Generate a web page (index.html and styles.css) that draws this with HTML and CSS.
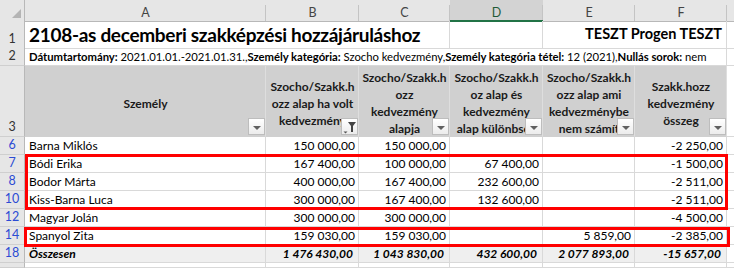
FILE: index.html
```html
<!DOCTYPE html>
<html lang="hu">
<head>
<meta charset="utf-8">
<title>Szakképzési hozzájárulás</title>
<link rel="stylesheet" href="styles.css">
</head>
<body>
<div class="sheet">
  <div class="row hdr">
    <div class="corner"><span class="tri"></span></div>
    <div class="ch">A</div>
    <div class="ch">B</div>
    <div class="ch">C</div>
    <div class="ch sel">D</div>
    <div class="ch">E</div>
    <div class="ch">F</div>
    <div class="ch rest"></div>
  </div>

  <div class="row r1">
    <div class="rh">1</div>
    <div class="c title span3">2108-as decemberi szakképzési hozzájáruláshoz</div>
    <div class="c"></div>
    <div class="c teszt span2">TESZT Progen TESZT</div>
    <div class="c rest"></div>
  </div>

  <div class="row r2">
    <div class="rh">2</div>
    <div class="c info span6"><b>Dátumtartomány:</b> 2021.01.01.-2021.01.31.,<b>Személy kategória:</b> Szocho kedvezmény,<b>Személy kategória tétel:</b> 12 (2021),<b>Nullás sorok:</b> nem</div>
    <div class="c rest"></div>
  </div>

  <div class="row r3">
    <div class="rh">3</div>
    <div class="c th"><div class="tt">Személy</div><span class="fb"><span class="arr"></span></span></div>
    <div class="c th"><div class="tt">Szocho/Szakk.h<br>ozz alap ha volt<br>kedvezmény</div><span class="fb on"><svg width="15" height="15" viewBox="0 0 15 15"><path d="M1.5 12.5h4l-2 2z" fill="#555"/><path d="M6 3h8l-3 4v6h-2v-6z" fill="#444"/></svg></span></div>
    <div class="c th"><div class="tt">Szocho/Szakk.h<br>ozz<br>kedvezmény<br>alapja</div><span class="fb"><span class="arr"></span></span></div>
    <div class="c th"><div class="tt">Szocho/Szakk.h<br>oz alap és<br>kedvezmény<br>alap különbség</div><span class="fb"><span class="arr"></span></span></div>
    <div class="c th"><div class="tt">Szocho/Szakk.h<br>ozz alap ami<br>kedvezménybe<br>nem számít</div><span class="fb"><span class="arr"></span></span></div>
    <div class="c th"><div class="tt">Szakk.hozz<br>kedvezmény<br>összeg</div><span class="fb"><span class="arr"></span></span></div>
    <div class="c rest"></div>
  </div>

  <div class="row d">
    <div class="rh f">6</div>
    <div class="c">Barna Miklós</div>
    <div class="c n">150 000,00</div>
    <div class="c n">150 000,00</div>
    <div class="c n"></div>
    <div class="c n"></div>
    <div class="c n">-2 250,00</div>
    <div class="c rest"></div>
  </div>
  <div class="row d">
    <div class="rh f">7</div>
    <div class="c">Bódi Erika</div>
    <div class="c n">167 400,00</div>
    <div class="c n">100 000,00</div>
    <div class="c n">67 400,00</div>
    <div class="c n"></div>
    <div class="c n">-1 500,00</div>
    <div class="c rest"></div>
  </div>
  <div class="row d">
    <div class="rh f">8</div>
    <div class="c">Bodor Márta</div>
    <div class="c n">400 000,00</div>
    <div class="c n">167 400,00</div>
    <div class="c n">232 600,00</div>
    <div class="c n"></div>
    <div class="c n">-2 511,00</div>
    <div class="c rest"></div>
  </div>
  <div class="row d">
    <div class="rh f">10</div>
    <div class="c">Kiss-Barna Luca</div>
    <div class="c n">300 000,00</div>
    <div class="c n">167 400,00</div>
    <div class="c n">132 600,00</div>
    <div class="c n"></div>
    <div class="c n">-2 511,00</div>
    <div class="c rest"></div>
  </div>
  <div class="row d">
    <div class="rh f">12</div>
    <div class="c">Magyar Jolán</div>
    <div class="c n">300 000,00</div>
    <div class="c n">300 000,00</div>
    <div class="c n"></div>
    <div class="c n"></div>
    <div class="c n">-4 500,00</div>
    <div class="c rest"></div>
  </div>
  <div class="row d">
    <div class="rh f">14</div>
    <div class="c">Spanyol Zita</div>
    <div class="c n">159 030,00</div>
    <div class="c n">159 030,00</div>
    <div class="c n"></div>
    <div class="c n">5 859,00</div>
    <div class="c n">-2 385,00</div>
    <div class="c rest"></div>
  </div>
  <div class="row d tot">
    <div class="rh f">18</div>
    <div class="c">Összesen</div>
    <div class="c n">1 476 430,00</div>
    <div class="c n">1 043 830,00</div>
    <div class="c n">432 600,00</div>
    <div class="c n">2 077 893,00</div>
    <div class="c n">-15 657,00</div>
    <div class="c rest"></div>
  </div>
  <div class="row d tail">
    <div class="rh"></div>
    <div class="c"></div>
    <div class="c"></div>
    <div class="c"></div>
    <div class="c"></div>
    <div class="c"></div>
    <div class="c"></div>
    <div class="c rest"></div>
  </div>

  <div class="mark m1"></div>
  <div class="mark m2"></div>
</div>
</body>
</html>
```

FILE: styles.css
```css
html, body {
  margin: 0;
  padding: 0;
  background: #ffffff;
}

.sheet {
  position: relative;
  width: 734px;
  height: 268px;
  overflow: hidden;
  font-family: Lato, "Open Sans", sans-serif;
  font-size: 12px;
  color: #000;
}

.row {
  display: grid;
  grid-template-columns: 25px 241px 93px 91px 93px 92px 92px 1fr;
}

.row > div {
  box-sizing: border-box;
  min-width: 0;
}

/* column header */
.hdr { height: 21px; }
.ch {
  background:
    linear-gradient(#c4c4c4, #c4c4c4) right 5px / 1px 16px no-repeat,
    #e6e6e6;
  border-bottom: 1px solid #b8b8b8;
  color: #444;
  font-size: 12.5px;
  text-align: center;
  padding-top: 5px;
  line-height: 15px;
}
.ch.sel {
  background:
    linear-gradient(#c4c4c4, #c4c4c4) right 5px / 1px 16px no-repeat,
    #d3d3d3;
  border-bottom: 2px solid #217346;
  color: #1e5a37;
}
.ch.rest { background: #e6e6e6; }

.corner {
  background: #e6e6e6;
  border-right: 1px solid #b8b8b8;
  border-bottom: 1px solid #b8b8b8;
  display: flex;
  justify-content: flex-end;
  align-items: flex-end;
  padding: 0 3px 3px 0;
}
.tri {
  width: 0;
  height: 0;
  border-left: 9px solid transparent;
  border-bottom: 9px solid #b4b4b4;
}

/* row header */
.rh {
  background: #e6e6e6;
  border-right: 1px solid #b8b8b8;
  border-bottom: 1px solid #cfcfcf;
  color: #333;
  font-size: 12.5px;
  text-align: center;
  display: flex;
  align-items: flex-end;
  justify-content: center;
  padding-bottom: 1px;
  line-height: 16px;
}
.rh.f { color: #2b4bd4; }

/* cells */
.c {
  border-right: 1px solid #d9d9d9;
  border-bottom: 1px solid #d9d9d9;
  white-space: nowrap;
  overflow: hidden;
  padding: 0 3px 0 4px;
  line-height: 17px;
}
.span2 { grid-column: span 2; }
.span3 { grid-column: span 3; }
.span6 { grid-column: span 6; }

.r1 { height: 27px; }
.r1 .c { overflow: visible; }
.title {
  font-size: 19px;
  font-weight: 700;
  letter-spacing: -0.3px;
  line-height: 26px;
  padding-top: 1px;
}
.teszt {
  font-size: 14.5px;
  font-weight: 700;
  text-align: right;
  line-height: 22px;
  padding-top: 2px;
  padding-right: 4px;
}

.r2 { height: 18px; }
.info {
  font-size: 11.3px;
  letter-spacing: -0.03px;
  line-height: 17px;
  overflow: visible;
}

.r3 { height: 71px; }
.th {
  position: relative;
  background: #d0d0d0;
  border-right: 1px solid #dedede;
  border-bottom: 1px solid #d0d0d0;
  font-weight: 700;
  color: #1a1a1a;
  text-align: center;
  display: flex;
  align-items: center;
  justify-content: center;
  padding: 4px 1px 0 2px;
}
.tt {
  width: 100%;
  line-height: 17px;
  text-align: center;
}
.r3 .rest { background: #fff; }

.fb {
  position: absolute;
  right: 0;
  bottom: 1px;
  width: 17px;
  height: 17px;
  box-sizing: border-box;
  border: 1px solid #bdbdbd;
  background: linear-gradient(#ffffff, #ececec);
  display: flex;
  align-items: center;
  justify-content: center;
}
.arr {
  width: 0;
  height: 0;
  border-left: 4px solid transparent;
  border-right: 4px solid transparent;
  border-top: 4px solid #606060;
  margin-top: 2px;
}

.d { height: 18px; }
.n { text-align: right; }

.tot .c {
  background: #efefef;
  font-weight: 700;
  font-style: italic;
  padding-right: 5px;
}
.tot .rest { background: #fff; }

.tail { height: 5px; }

/* red highlight frames */
.mark {
  position: absolute;
  border: 3px solid #ff0000;
  box-sizing: border-box;
}
.m1 { left: 25px; top: 154px; width: 703px; height: 56px; }
.m2 { left: 24px; top: 227px; width: 706px; height: 20px; }
```
